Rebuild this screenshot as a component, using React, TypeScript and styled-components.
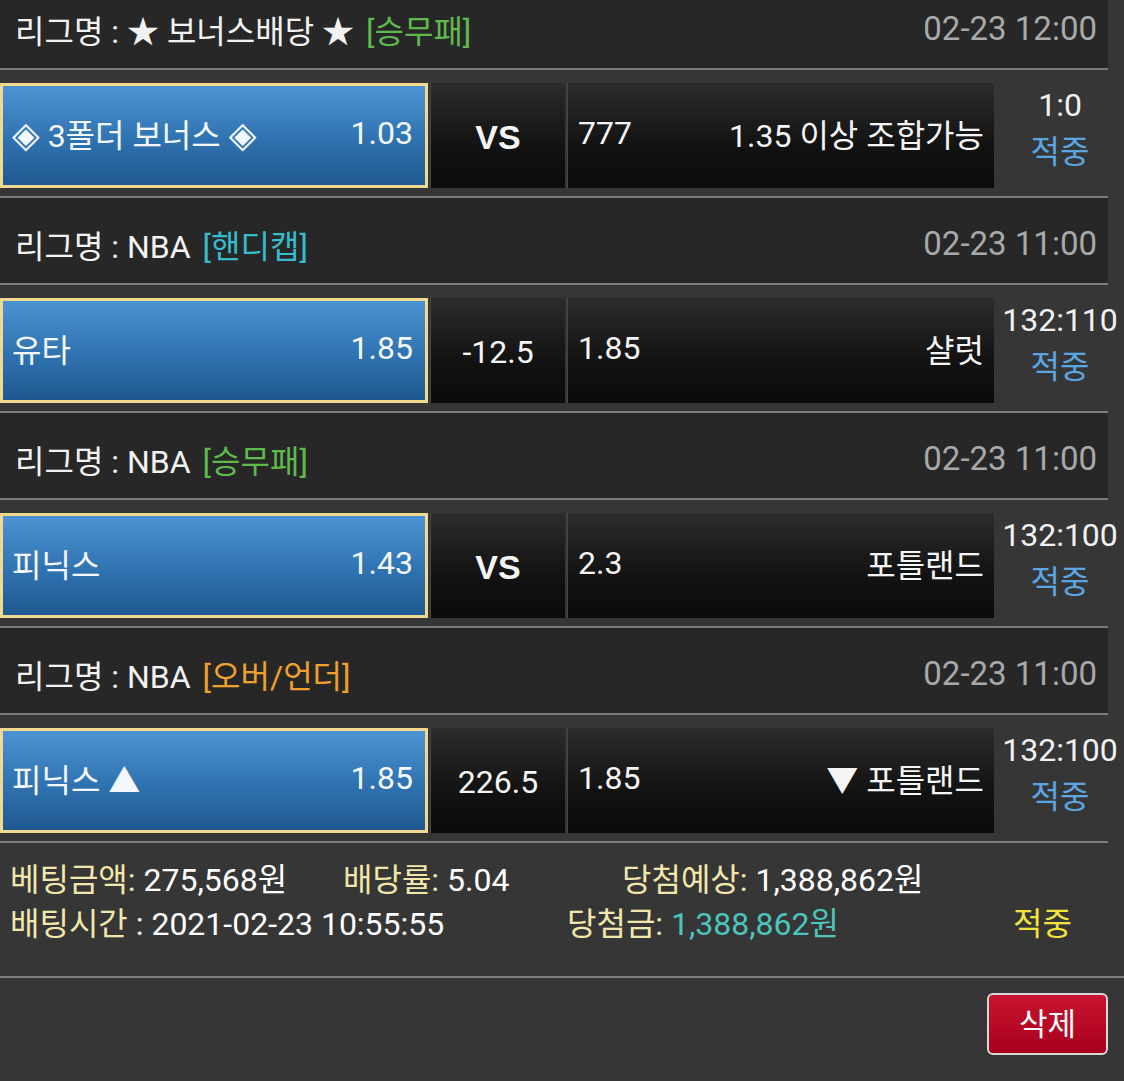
import styled, { createGlobalStyle } from "styled-components";

const GlobalStyle = createGlobalStyle`
  body {
    margin: 0;
    background: #363636;
    font-family: Roboto, "Noto Sans CJK KR", "DejaVu Sans", sans-serif;
    color: #ffffff;
  }
`;

const Page = styled.div`
  width: 1124px;
  min-height: 1081px;
  background: #363636;
  overflow: hidden;
`;

const List = styled.div`
  display: flex;
  flex-direction: column;
  margin-top: -17px;
`;

const Line = styled.div<{ $full?: boolean }>`
  height: 2px;
  width: ${(p) => (p.$full ? "100%" : "1108px")};
  background: #7c7c7c;
`;

const LeagueHeader = styled.div`
  display: flex;
  align-items: center;
  justify-content: space-between;
  width: 1108px;
  height: 85px;
  box-sizing: border-box;
  padding: 6px 11px 0 15px;
  background: #272727;
  font-size: 32px;
`;

const LeagueName = styled.span`
  color: #f2f2f2;
`;

const Tag = styled.span<{ $color: string }>`
  color: ${(p) => p.$color};
  margin-left: 12px;
`;

const GameTime = styled.span`
  color: #a9a9a9;
  font-size: 33px;
`;

const MatchRow = styled.div`
  display: grid;
  grid-template-columns: 428px 135px 427px 1fr;
  column-gap: 2px;
  align-items: center;
  height: 126px;
  box-sizing: border-box;
  padding: 13px 0 8px;
`;

const HomeCell = styled.div`
  display: flex;
  align-items: center;
  justify-content: space-between;
  height: 105px;
  box-sizing: border-box;
  padding: 0 12px 5px 9px;
  border: 3px solid #f1d98f;
  background: linear-gradient(#4c93d3, #2f72b0 55%, #1f5890);
  font-size: 32px;
  color: #f4f8fc;
`;

const Diamond = styled.span`
  font-size: 36px;
`;

const DarkCell = styled.div<{ $center?: boolean }>`
  display: flex;
  align-items: center;
  justify-content: ${(p) => (p.$center ? "center" : "space-between")};
  height: 105px;
  box-sizing: border-box;
  padding: 0 10px 5px;
  background: linear-gradient(#2c2c2c, #121212 60%, #0b0b0b);
  font-size: 32px;
  color: #f5f5f5;
  border-left: 1px solid #474747;
`;

const Versus = styled.span`
  font-family: "Liberation Sans", Arial, sans-serif;
  font-weight: 700;
  font-size: 34px;
  margin-top: 8px;
`;

const Handicap = styled.span`
  margin-top: 8px;
`;

const ScoreCell = styled.div`
  display: flex;
  flex-direction: column;
  align-items: center;
  font-size: 32px;
  line-height: 47px;
  margin-top: -14px;
`;

const Score = styled.span`
  color: #f2f2f2;
`;

const Hit = styled.span<{ $color?: string }>`
  color: ${(p) => p.$color ?? "#5ba6e0"};
`;

const Summary = styled.div`
  display: flex;
  flex-direction: column;
  padding: 15px 0 30px 10px;
  font-size: 32px;
`;

const SummaryRow = styled.div<{ $cols: string }>`
  display: grid;
  grid-template-columns: ${(p) => p.$cols};
  line-height: 44px;
  white-space: nowrap;
`;

const Label = styled.span`
  color: #f1e7ab;
`;

const Value = styled.span<{ $color?: string }>`
  color: ${(p) => p.$color ?? "#ffffff"};
`;

const Actions = styled.div`
  display: flex;
  justify-content: flex-end;
  padding: 15px 16px 0 0;
`;

const DeleteButton = styled.button`
  width: 121px;
  height: 62px;
  border: 2px solid #d9d9d9;
  border-radius: 6px;
  background: linear-gradient(#c8142f, #a9001d);
  color: #ffffff;
  font-family: Roboto, "Noto Sans CJK KR", sans-serif;
  font-size: 31px;
  padding: 0 0 6px;
  cursor: pointer;
`;

type Game = {
  league: string;
  tag: string;
  tagColor: string;
  time: string;
  home: string;
  bonus?: boolean;
  homeOdds: string;
  middle: string;
  bold?: boolean;
  awayOdds: string;
  away: string;
  score: string;
};

const games: Game[] = [
  {
    league: "리그명 : ★ 보너스배당 ★",
    tag: "[승무패]",
    tagColor: "#5fba4c",
    time: "02-23 12:00",
    home: "3폴더 보너스",
    bonus: true,
    homeOdds: "1.03",
    middle: "VS",
    bold: true,
    awayOdds: "777",
    away: "1.35 이상 조합가능",
    score: "1:0",
  },
  {
    league: "리그명 : NBA",
    tag: "[핸디캡]",
    tagColor: "#37bccd",
    time: "02-23 11:00",
    home: "유타",
    homeOdds: "1.85",
    middle: "-12.5",
    awayOdds: "1.85",
    away: "샬럿",
    score: "132:110",
  },
  {
    league: "리그명 : NBA",
    tag: "[승무패]",
    tagColor: "#5fba4c",
    time: "02-23 11:00",
    home: "피닉스",
    homeOdds: "1.43",
    middle: "VS",
    bold: true,
    awayOdds: "2.3",
    away: "포틀랜드",
    score: "132:100",
  },
  {
    league: "리그명 : NBA",
    tag: "[오버/언더]",
    tagColor: "#f0a02e",
    time: "02-23 11:00",
    home: "피닉스 ▲",
    homeOdds: "1.85",
    middle: "226.5",
    awayOdds: "1.85",
    away: "▼ 포틀랜드",
    score: "132:100",
  },
];

export default function App() {
  return (
    <Page>
      <GlobalStyle />
      <List>
        {games.map((g, i) => (
          <div key={i}>
            <LeagueHeader>
              <span>
                <LeagueName>{g.league}</LeagueName>
                <Tag $color={g.tagColor}>{g.tag}</Tag>
              </span>
              <GameTime>{g.time}</GameTime>
            </LeagueHeader>
            <Line />
            <MatchRow>
              <HomeCell>
                {g.bonus ? (
                  <span>
                    <Diamond>◈</Diamond> {g.home} <Diamond>◈</Diamond>
                  </span>
                ) : (
                  <span>{g.home}</span>
                )}
                <span>{g.homeOdds}</span>
              </HomeCell>
              <DarkCell $center>
                {g.bold ? <Versus>{g.middle}</Versus> : <Handicap>{g.middle}</Handicap>}
              </DarkCell>
              <DarkCell>
                <span>{g.awayOdds}</span>
                <span>{g.away}</span>
              </DarkCell>
              <ScoreCell>
                <Score>{g.score}</Score>
                <Hit>적중</Hit>
              </ScoreCell>
            </MatchRow>
            <Line />
          </div>
        ))}
      </List>
      <Summary>
        <SummaryRow $cols="333px 279px auto">
          <span>
            <Label>베팅금액:</Label> <Value>275,568원</Value>
          </span>
          <span>
            <Label>배당률:</Label> <Value>5.04</Value>
          </span>
          <span>
            <Label>당첨예상:</Label> <Value>1,388,862원</Value>
          </span>
        </SummaryRow>
        <SummaryRow $cols="557px 446px auto">
          <span>
            <Label>배팅시간</Label> <Value>: 2021-02-23 10:55:55</Value>
          </span>
          <span>
            <Label>당첨금:</Label> <Value $color="#4cc6bd">1,388,862원</Value>
          </span>
          <Hit $color="#f2e43c">적중</Hit>
        </SummaryRow>
      </Summary>
      <Line $full />
      <Actions>
        <DeleteButton>삭제</DeleteButton>
      </Actions>
    </Page>
  );
}
